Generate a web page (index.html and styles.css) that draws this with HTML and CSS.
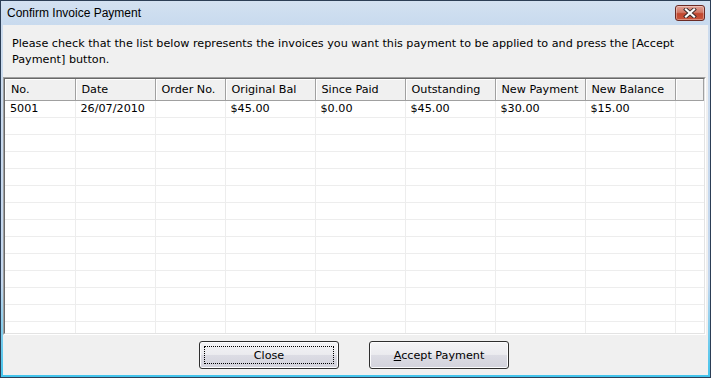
FILE: index.html
```html
<!DOCTYPE html>
<html lang="en">
<head>
    <meta charset="UTF-8">
    <title>Confirm Invoice Payment</title>
    <link rel="stylesheet" href="styles.css">
</head>
<body>
    <div class="window">
        <div class="titlebar">
            <span class="title">Confirm Invoice Payment</span>
            <div class="close-x">
                <svg width="14" height="10" viewBox="0 0 14 10">
                    <path d="M3 1.5 L11 8.5 M11 1.5 L3 8.5" stroke="#3a2a2a" stroke-width="4" stroke-linecap="square" fill="none"/>
                    <path d="M3 1.5 L11 8.5 M11 1.5 L3 8.5" stroke="#ffffff" stroke-width="2.2" stroke-linecap="square" fill="none"/>
                </svg>
            </div>
        </div>

        <div class="client">
            <p class="intro">Please check that the list below represents the invoices you want this payment to be applied to and press the [Accept Payment] button.</p>

            <div class="list">
                <div class="list-inner">
                    <table class="grid">
                        <colgroup>
                            <col style="width:70px">
                            <col style="width:80px">
                            <col style="width:70px">
                            <col style="width:90px">
                            <col style="width:90px">
                            <col style="width:90px">
                            <col style="width:90px">
                            <col style="width:90px">
                            <col>
                        </colgroup>
                        <thead>
                            <tr>
                                <th>No.</th>
                                <th>Date</th>
                                <th>Order No.</th>
                                <th>Original Bal</th>
                                <th>Since Paid</th>
                                <th>Outstanding</th>
                                <th>New Payment</th>
                                <th>New Balance</th>
                                <th></th>
                            </tr>
                        </thead>
                        <tbody id="rows">
                            <tr>
                                <td>5001</td>
                                <td>26/07/2010</td>
                                <td></td>
                                <td>$45.00</td>
                                <td>$0.00</td>
                                <td>$45.00</td>
                                <td>$30.00</td>
                                <td>$15.00</td>
                                <td></td>
                            </tr>
                        </tbody>
                    </table>
                </div>
            </div>

            <div class="buttons">
                <button class="btn focused">Close</button>
                <button class="btn"><u>A</u>ccept Payment</button>
            </div>
        </div>
    </div>

    <script>
        // пустые строки сетки до низа списка
        const rows = document.getElementById('rows');
        for (let i = 0; i < 14; i++) {
            const tr = document.createElement('tr');
            for (let j = 0; j < 9; j++) {
                tr.appendChild(document.createElement('td'));
            }
            rows.appendChild(tr);
        }
    </script>
</body>
</html>
```

FILE: styles.css
```css
* {
    box-sizing: border-box;
}
body {
    margin: 0;
    font-family: "DejaVu Sans", Verdana, sans-serif;
    font-size: 11.2px;
    color: #000;
    background: #fff;
}
.window {
    width: 711px;
    height: 378px;
    border: 1px solid #2c3e56;
    background: linear-gradient(#cddcee 0%, #c4d8ef 75%, #42c4ec 100%);
    display: flex;
    flex-direction: column;
    overflow: hidden;
}
.titlebar {
    height: 24px;
    display: flex;
    align-items: flex-start;
    background: linear-gradient(#d3e1f1, #c8daee);
}
.title {
    padding: 5px 0 0 6px;
    font-family: "Liberation Sans", Arial, sans-serif;
    font-size: 12px;
    line-height: 15px;
}
.close-x {
    margin: 4px 5px 0 auto;
    width: 30px;
    height: 16px;
    border: 1px solid #6b2a24;
    border-radius: 3px;
    background: linear-gradient(#e2a094 0%, #d27a68 45%, #c1472f 55%, #c9553c 100%);
    box-shadow: inset 0 0 0 1px rgba(255,255,255,0.35);
    display: flex;
    align-items: center;
    justify-content: center;
}
.client {
    flex: 1;
    margin: 0 2px 2px 2px;
    background: #f0f0f0;
    display: flex;
    flex-direction: column;
}
.intro {
    margin: 0;
    padding: 11px 20px 0 9px;
    line-height: 16px;
    height: 52px;
}
.list {
    height: 258px;
    margin-right: 2px;
    border: 1px solid;
    border-color: #a0a0a0 #ffffff #ffffff #a0a0a0;
}
.list-inner {
    height: 100%;
    border: 1px solid;
    border-color: #696969 #e3e3e3 #e3e3e3 #696969;
    background: #fff;
    overflow: hidden;
}
.grid {
    width: 100%;
    table-layout: fixed;
    border-collapse: collapse;
}
.grid th {
    height: 21px;
    padding: 0 0 0 6px;
    text-align: left;
    font-weight: normal;
    white-space: nowrap;
    overflow: hidden;
    background: #f0f0f0;
    border-right: 1px solid #a0a0a0;
    border-bottom: 1px solid #a0a0a0;
    box-shadow: inset 1px 1px #ffffff;
}
.grid td {
    height: 17px;
    padding: 0 0 0 5px;
    white-space: nowrap;
    overflow: hidden;
    border-right: 1px solid #ededed;
    border-bottom: 1px solid #ededed;
}
.grid td:last-child {
    border-right: none;
}
.buttons {
    display: flex;
    justify-content: center;
    gap: 30px;
    padding: 6px 3px 0 0;
}
.btn {
    position: relative;
    width: 140px;
    height: 28px;
    font-family: inherit;
    font-size: 11.2px;
    color: #000;
    border: 1px solid #2e2e2e;
    border-radius: 3px;
    background: linear-gradient(#f4f4f6 0%, #ebebef 48%, #dcdce4 52%, #d2d2dc 100%);
    box-shadow: inset 0 0 0 1px #fbfbfd;
    padding: 0;
}
.btn.focused::after {
    content: "";
    position: absolute;
    top: 4px;
    left: 4px;
    right: 4px;
    bottom: 4px;
    border: 1px dotted #000;
}
```
